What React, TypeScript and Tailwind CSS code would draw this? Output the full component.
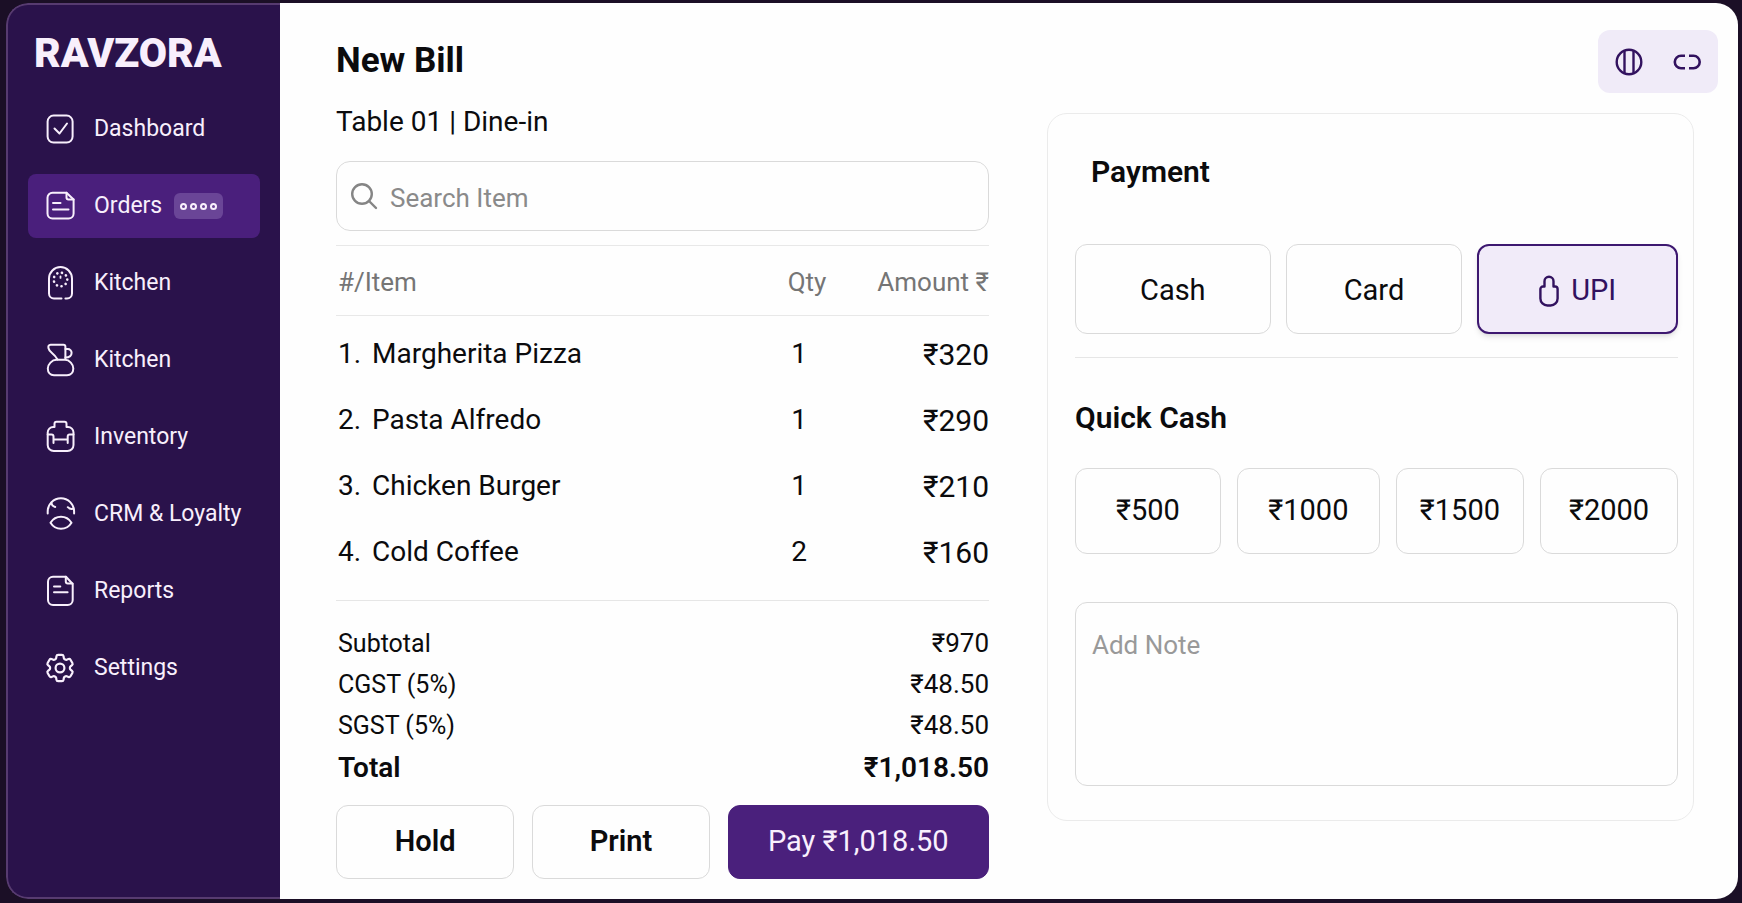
import { useState } from "react";
import type { ReactNode } from "react";
import { HiOutlineCog6Tooth } from "react-icons/hi2";

function Glyph({ children }: { children: ReactNode }) {
  return (
    <svg
      viewBox="0 0 32 36"
      className="h-9 w-8 shrink-0"
      fill="none"
      stroke="currentColor"
      strokeWidth="2"
      strokeLinecap="round"
      strokeLinejoin="round"
      aria-hidden="true"
    >
      {children}
    </svg>
  );
}

const DashboardIcon = () => (
  <Glyph>
    <rect x="3.6" y="4.6" width="25" height="27" rx="6" />
    <path d="M10.5 17.5l5 5 7.5-10" />
  </Glyph>
);

const OrdersIcon = () => (
  <Glyph>
    <path d="M8.5 4.8H22.5L29.6 11.5V25.5a5 5 0 0 1-5 5H8.5a5 5 0 0 1-5-5V9.8a5 5 0 0 1 5-5z" />
    <path d="M22.5 4.8V9.5a2 2 0 0 0 2 2h5.1" />
    <path d="M9 15h7.5M9 21.5h15.5" />
  </Glyph>
);

const ShakerIcon = () => (
  <Glyph>
    <path d="M17.5 33.5H10a5 5 0 0 1-5-5V13.6a11.5 11.5 0 0 1 23 0V28.5a5 5 0 0 1-5 5h-1.6" />
    <circle cx="16.5" cy="14.5" r="6.8" strokeWidth="2.6" strokeDasharray="0.1 4.65" />
    <path d="M16.5 11.5v1.4" strokeWidth="1.8" />
  </Glyph>
);

const CupIcon = () => (
  <Glyph>
    <path d="M21.4 17V4.8a2 2 0 0 0-2-2H6.6C4.6 2.8 4 4.4 4.5 6.2C5.5 11 9.5 10.5 13.5 17.5" />
    <path d="M21.5 7h2.3a3.8 3.8 0 0 1 3.8 3.8c0 3-2.6 4.800-6.200 4.800" />
    <path d="M12.5 17.8h8.5c4.5 0 8.3 4.5 8.3 8.7 0 4-2.5 6.700-6.300 6.700H10c-3.800 0-6.200-2.700-6.200-6.700 0-4.200 4.200-8.700 8.700-8.700z" />
  </Glyph>
);

const InventoryIcon = () => (
  <Glyph>
    <path d="M10.5 8V4.8a2 2 0 0 1 2-2h8a2 2 0 0 1 2 2V8h1.500a5.500 5.500 0 0 1 5.500 5.500V26a6 6 0 0 1-6 6H9.700a6 6 0 0 1-6-6V13.500A5.500 5.500 0 0 1 9.200 8z" />
    <path d="M3.7 15.5H7.5a2 2 0 0 1 2 2V24M29.5 15.5H25.7a2 2 0 0 0-2 2V24M9.5 20.6h14.2" />
  </Glyph>
);

const LoyaltyIcon = () => (
  <Glyph>
    <path d="M3.7 17.5V15.5a13.2 13.2 0 0 1 26.4 0v2" />
    <path d="M7.5 6.5c0 2 1.500 3.800 3.700 4.500M29 12.800c-2 .3-4-.2-5.200-1.600" />
    <path d="M6.5 26.700c2.500-4 6-6 10.500-6s8 2 10.500 6c-2.500 4-6 6-10.500 6s-8-2-10.500-6z" />
  </Glyph>
);

const ReportsIcon = () => (
  <Glyph>
    <path d="M9 3.8h13L28.7 11V27a5 5 0 0 1-5 5H9a5 5 0 0 1-5-5V8.800a5 5 0 0 1 5-5z" />
    <path d="M21.8 3.8v4.7a2 2 0 0 0 2 2h4.7" />
    <path d="M10 13.5h6.3M10 19.2h13.6" />
  </Glyph>
);

const SettingsIcon = () => (
  <HiOutlineCog6Tooth className="h-9 w-8 shrink-0 scale-110" aria-hidden="true" />
);

const navItems = [
  { label: "Dashboard", Icon: DashboardIcon },
  { label: "Orders", Icon: OrdersIcon, active: true },
  { label: "Kitchen", Icon: ShakerIcon },
  { label: "Kitchen", Icon: CupIcon },
  { label: "Inventory", Icon: InventoryIcon },
  { label: "CRM & Loyalty", Icon: LoyaltyIcon },
  { label: "Reports", Icon: ReportsIcon },
  { label: "Settings", Icon: SettingsIcon },
];

const items = [
  { name: "Margherita Pizza", qty: 1, amount: "₹320" },
  { name: "Pasta Alfredo", qty: 1, amount: "₹290" },
  { name: "Chicken Burger", qty: 1, amount: "₹210" },
  { name: "Cold Coffee", qty: 2, amount: "₹160" },
];

const charges = [
  { label: "Subtotal", value: "₹970" },
  { label: "CGST (5%)", value: "₹48.50" },
  { label: "SGST (5%)", value: "₹48.50" },
];

const methods = [
  { name: "Cash", size: "flex-[196]" },
  { name: "Card", size: "flex-[177]" },
  { name: "UPI", size: "flex-[199]" },
];

const quickCash = [
  { label: "₹500", size: "flex-[146]" },
  { label: "₹1000", size: "flex-[143]" },
  { label: "₹1500", size: "flex-[128]" },
  { label: "₹2000", size: "flex-[138]" },
];

function Sidebar() {
  return (
    <aside className="w-[274px] shrink-0 rounded-l-[22px] border-y-2 border-l-2 border-[#573b70] bg-[#2a124b] text-[#f8effc]">
      <div className="pt-6 pl-[26px] text-[41px] leading-[48px] font-black">RAVZORA</div>
      <nav className="mt-5 flex flex-col gap-[13px] pr-5 pl-5">
        {navItems.map(({ label, Icon, active }, i) => (
          <a
            key={i}
            href="#"
            aria-current={active ? "page" : undefined}
            className={`flex h-16 items-center rounded-lg pl-4 text-[23px] ${
              active ? "bg-[#4a1f7c]" : ""
            }`}
          >
            <Icon />
            <span className="ml-[18px] whitespace-nowrap">{label}</span>
            {active && (
              <span className="ml-3 flex h-[26px] w-[49px] items-center justify-center gap-[3px] rounded-md bg-[#6a4597]">
                {[0, 1, 2, 3].map((dot) => (
                  <span key={dot} className="size-[7px] rounded-full border-2 border-[#f8effc]" />
                ))}
              </span>
            )}
          </a>
        ))}
      </nav>
    </aside>
  );
}

function Bill() {
  return (
    <section className="flex flex-col">
      <h1 className="mt-9 text-[35px] leading-[44px] font-bold">New Bill</h1>
      <p className="mt-[21px] text-[28px] leading-9">Table 01 | Dine-in</p>
      <label className="mt-[21px] flex h-[70px] items-center rounded-[14px] border border-[#dadada] pl-[13px]">
        <svg
          viewBox="0 0 28 28"
          className="size-7 shrink-0 text-[#858585]"
          fill="none"
          stroke="currentColor"
          strokeWidth="2.4"
          strokeLinecap="round"
          aria-hidden="true"
        >
          <circle cx="12" cy="12" r="9.8" />
          <path d="M19 19l7 7" />
        </svg>
        <input
          type="search"
          aria-label="Search Item"
          placeholder="Search Item"
          className="ml-3 h-full min-w-0 flex-1 bg-transparent pt-1 text-[26px] outline-none placeholder:text-[#8a8a8a]"
        />
      </label>
      <table className="mt-[14px] w-full border-collapse text-[28px]">
        <thead>
          <tr className="h-[70px] border-y border-[#e8e8e8] text-[26px] text-[#757575]">
            <th className="pt-1 pl-[2px] text-left font-normal">#/Item</th>
            <th className="w-[76px] pt-1 text-center font-normal">Qty</th>
            <th className="w-[144px] pt-1 text-right font-normal">Amount ₹</th>
          </tr>
        </thead>
        <tbody className="before:block before:h-[5px]">
          {items.map((item, i) => (
            <tr key={item.name} className="h-[66px]">
              <td className="pl-[2px]">
                <span className="inline-block w-[34px]">{i + 1}.</span>
                {item.name}
              </td>
              <td className="pr-4 text-center">{item.qty}</td>
              <td className="text-right text-[30px]">{item.amount}</td>
            </tr>
          ))}
        </tbody>
      </table>
      <dl className="mt-[15px] border-t border-[#e6e6e6] pt-[22px] pl-[2px]">
        {charges.map((c) => (
          <div key={c.label} className="flex h-[41px] items-center justify-between">
            <dt className="text-[25px]">{c.label}</dt>
            <dd className="text-[26px]">{c.value}</dd>
          </div>
        ))}
        <div className="flex h-11 items-center justify-between text-[28px] font-semibold">
          <dt>Total</dt>
          <dd>₹1,018.50</dd>
        </div>
      </dl>
      <div className="mt-[15px] flex h-[74px] gap-[18px] text-[29px]">
        <button type="button" className="flex-[178] rounded-xl border border-[#dadada] font-semibold">
          Hold
        </button>
        <button type="button" className="flex-[177] rounded-xl border border-[#dadada] font-semibold">
          Print
        </button>
        <button type="button" className="flex-[262] rounded-xl border border-[#4a207c] bg-[#4a207c] text-[#f9f0fe]">
          Pay ₹1,018.50
        </button>
      </div>
    </section>
  );
}

function Toolbar() {
  return (
    <div className="mt-[27px] flex h-[63px] w-[120px] items-center justify-between self-end rounded-xl bg-[#f0ebf8] px-4 text-[#32125f]">
      <button type="button" aria-label="Language">
        <svg viewBox="0 0 30 30" className="size-[30px]" fill="none" stroke="currentColor" strokeWidth="2.4" aria-hidden="true">
          <circle cx="15" cy="15" r="12.3" />
          <path d="M10.5 4v22M19.5 4v22" />
        </svg>
      </button>
      <button type="button" aria-label="Connection">
        <svg viewBox="0 0 30 30" className="size-[30px]" fill="none" stroke="currentColor" strokeWidth="2.6" aria-hidden="true">
          <path d="M13 8.8H9a6.200 6.200 0 0 0 0 12.400h4M17 8.800h4.500a6.200 6.200 0 0 1 0 12.400H17" />
        </svg>
      </button>
    </div>
  );
}

function Payment() {
  const [method, setMethod] = useState("UPI");
  return (
    <section className="flex flex-col">
      <Toolbar />
      <div className="mt-5 mr-6 rounded-[20px] border border-[#ebebeb] pt-[38px] pr-[15px] pb-[34px] pl-[27px]">
        <h2 className="pl-4 text-[30px] leading-10 font-semibold">Payment</h2>
        <div className="mt-[52px] flex h-[90px] gap-[15px] text-[29px]">
          {methods.map(({ name, size }) => (
            <button
              key={name}
              type="button"
              aria-pressed={method === name}
              onClick={() => setMethod(name)}
              className={`flex items-center justify-center gap-3 rounded-xl pt-1 ${size} ${
                method === name
                  ? "border-2 border-[#3d1870] bg-[#f1ebf9] text-[#32125f] shadow-md"
                  : "border border-[#dadada]"
              }`}
            >
              {name === "UPI" && (
                <svg viewBox="0 0 20 32" className="h-8 w-5" fill="none" stroke="currentColor" strokeWidth="2.4" strokeLinejoin="round" aria-hidden="true">
                  <path d="M5.5 11.5V6.2a4.500 4.500 0 0 1 9 0V11.500h1.500a2.600 2.600 0 0 1 2.600 2.600v9.400a7 7 0 0 1-7 7h-3.200a7 7 0 0 1-7-7V14.100a2.600 2.600 0 0 1 2.600-2.600z" />
                </svg>
              )}
              {name}
            </button>
          ))}
        </div>
        <hr className="mt-[23px] border-t border-[#e6e6e6]" />
        <h2 className="mt-10 text-[30px] leading-10 font-semibold">Quick Cash</h2>
        <div className="mt-[30px] flex h-[86px] gap-4 text-[29px]">
          {quickCash.map(({ label, size }) => (
            <button key={label} type="button" className={`rounded-xl border border-[#dadada] ${size}`}>
              {label}
            </button>
          ))}
        </div>
        <textarea
          aria-label="Add Note"
          placeholder="Add Note"
          className="mt-12 block h-[184px] w-full resize-none rounded-xl border border-[#dadada] bg-transparent px-4 py-6 text-[26px] leading-9 outline-none placeholder:text-[#999999]"
        />
      </div>
    </section>
  );
}

export default function App() {
  return (
    <div className="flex min-h-screen bg-[#1b0f26] pt-[3px] pr-1 pb-1 pl-[6px] font-[Roboto,sans-serif] text-[#0b0b0d]">
      <div className="flex flex-1 overflow-hidden rounded-[22px]">
        <Sidebar />
        <main className="grid flex-1 grid-cols-[653fr_671fr] gap-[58px] bg-[#fefefe] pr-5 pb-4 pl-14">
          <Bill />
          <Payment />
        </main>
      </div>
    </div>
  );
}
